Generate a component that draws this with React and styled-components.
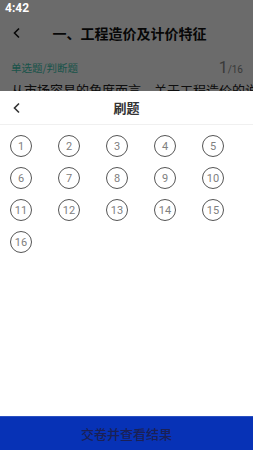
import React from 'react';
import styled, { createGlobalStyle } from 'styled-components';

const GlobalStyle = createGlobalStyle`
  html, body {
    margin: 0;
    padding: 0;
    background: #ffffff;
    font-family: "Noto Sans CJK SC", "Noto Sans", Roboto, sans-serif;
  }
`;

const Screen = styled.div`
  position: relative;
  width: 253px;
  height: 450px;
  overflow: hidden;
  background: #ffffff;
`;

const StatusBar = styled.div`
  height: 16px;
  padding: 0 5px;
  display: flex;
  align-items: center;
  font-family: Roboto, sans-serif;
  font-size: 12px;
  font-weight: 700;
  color: #ffffff;
  position: relative;
  z-index: 2;
`;

const PageHeader = styled.div`
  height: 34px;
  display: flex;
  align-items: center;
  padding: 0 12px;
`;

const PageTitle = styled.div`
  flex: 1;
  text-align: center;
  font-size: 14px;
  font-weight: 700;
  color: #111;
  padding-right: 4px;
`;

const TypeRow = styled.div`
  margin-top: 8px;
  height: 18px;
  display: flex;
  align-items: center;
  justify-content: space-between;
  padding: 0 10px 0 11px;
`;

const TypeLabel = styled.span`
  font-size: 10.5px;
  color: #40c8b0;
`;

const Counter = styled.span`
  font-family: Roboto, sans-serif;
  color: #888;
  font-size: 16px;
  small {
    font-size: 10px;
  }
`;

const Question = styled.div`
  margin-top: 6px;
  padding: 0 11px;
  font-size: 13px;
  line-height: 16px;
  color: #222;
  white-space: nowrap;
`;

const Dim = styled.div`
  position: absolute;
  inset: 0;
  background: rgba(0, 0, 0, 0.58);
`;

const Sheet = styled.div`
  position: absolute;
  left: 0;
  right: 0;
  top: 91px;
  bottom: 0;
  background: #ffffff;
  display: flex;
  flex-direction: column;
`;

const SheetHeader = styled.div`
  height: 33px;
  display: flex;
  align-items: center;
  padding: 0 12px;
  border-bottom: 1px solid #f0f0f0;
`;

const SheetTitle = styled.div`
  flex: 1;
  text-align: center;
  font-size: 13px;
  font-weight: 700;
  color: #333;
  padding-right: 10px;
`;

const Grid = styled.div`
  flex: 1;
  display: grid;
  grid-template-columns: repeat(5, 22px);
  grid-auto-rows: 22px;
  column-gap: 26px;
  row-gap: 10px;
  align-content: start;
  padding: 10px 0 0 10px;
`;

const Num = styled.div`
  width: 22px;
  height: 22px;
  box-sizing: border-box;
  border: 1.4px solid #555;
  border-radius: 50%;
  display: flex;
  align-items: center;
  justify-content: center;
  font-family: Roboto, sans-serif;
  font-size: 11px;
  color: #808080;
`;

const Submit = styled.button`
  height: 34px;
  border: none;
  border-top: 1px solid #2a50c0;
  background: #0732b6;
  color: #1b2055;
  font-family: "Noto Sans CJK SC", sans-serif;
  font-size: 13px;
  font-weight: 500;
  padding: 0;
`;

const Back = ({ color }) => (
  <svg width="10" height="12" viewBox="0 0 10 12">
    <path d="M7 1.5 L2.5 6 L7 10.5" fill="none" stroke={color} strokeWidth="1.6" />
  </svg>
);

export default function App() {
  const nums = Array.from({ length: 16 }, (_, i) => i + 1);
  return (
    <Screen>
      <GlobalStyle />
      <StatusBar>4:42</StatusBar>
      <PageHeader>
        <Back color="#111" />
        <PageTitle>一、工程造价及计价特征</PageTitle>
      </PageHeader>
      <TypeRow>
        <TypeLabel>单选题/判断题</TypeLabel>
        <Counter>1<small>/16</small></Counter>
      </TypeRow>
      <Question>从市场容易的角度而言，关于工程造价的说法正确的</Question>
      <Dim />
      <Sheet>
        <SheetHeader>
          <Back color="#333" />
          <SheetTitle>刷题</SheetTitle>
        </SheetHeader>
        <Grid>
          {nums.map((n) => (
            <Num key={n}>{n}</Num>
          ))}
        </Grid>
        <Submit>交卷并查看结果</Submit>
      </Sheet>
    </Screen>
  );
}
